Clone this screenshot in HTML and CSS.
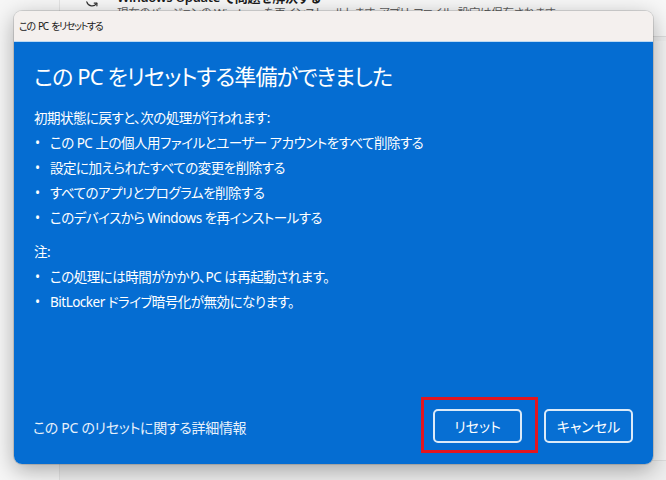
FILE: index.html
```html
<!DOCTYPE html>
<html lang="ja">
<head>
<meta charset="utf-8">
<title>この PC をリセットする</title>
<link rel="stylesheet" href="styles.css">
</head>
<body>
<div class="settings">
  <aside class="nav"></aside>
  <main class="content">
    <div class="card">
      <svg class="card-icon" viewBox="0 0 16 16" width="16" height="16" aria-hidden="true">
        <path d="M13.2 6.2A5.5 5.5 0 0 0 3.3 4.6" fill="none" stroke="#333" stroke-width="1.2" stroke-linecap="round"/>
        <path d="M3.1 2.2v2.7h2.7" fill="none" stroke="#333" stroke-width="1.2" stroke-linecap="round" stroke-linejoin="round"/>
        <path d="M2.8 9.8a5.5 5.5 0 0 0 9.9 1.6" fill="none" stroke="#333" stroke-width="1.2" stroke-linecap="round"/>
        <path d="M12.9 13.8v-2.7h-2.7" fill="none" stroke="#333" stroke-width="1.2" stroke-linecap="round" stroke-linejoin="round"/>
      </svg>
      <div class="card-text">
        <div class="card-title">Windows Update で問題を解決する</div>
        <div class="card-desc">現在のバージョンの Windows を再インストールします。アプリ、ファイル、設定は保存されます</div>
      </div>
    </div>
    <div class="card card-tall"></div>
  </main>
</div>

<div class="dialog">
  <div class="titlebar">この PC をリセットする</div>
  <div class="panel">
    <h1 class="heading">この PC をリセットする準備ができました</h1>
    <p class="lead">初期状態に戻すと、次の処理が行われます:</p>
    <ul class="bullets">
      <li>この PC 上の個人用ファイルとユーザー アカウントをすべて削除する</li>
      <li>設定に加えられたすべての変更を削除する</li>
      <li>すべてのアプリとプログラムを削除する</li>
      <li>このデバイスから Windows を再インストールする</li>
    </ul>
    <p class="note">注:</p>
    <ul class="bullets">
      <li>この処理には時間がかかり、PC は再起動されます。</li>
      <li>BitLocker ドライブ暗号化が無効になります。</li>
    </ul>
    <div class="footer">
      <a class="more">この PC のリセットに関する詳細情報</a>
      <div class="actions">
        <div class="mark-wrap">
          <button class="btn">リセット</button>
          <span class="mark"></span>
        </div>
        <button class="btn">キャンセル</button>
      </div>
    </div>
  </div>
</div>
</body>
</html>
```
FILE: styles.css
```css
* { box-sizing: border-box; }

html, body {
  margin: 0;
  padding: 0;
}

body {
  width: 666px;
  height: 480px;
  overflow: hidden;
  position: relative;
  background: #eeeeee;
  font-family: "Noto Sans", "Noto Sans CJK JP", sans-serif;
  font-feature-settings: "palt";
}

/* background settings page */
.settings {
  display: flex;
  height: 480px;
}

.nav {
  width: 60px;
  flex: none;
  background: #f6f6f6;
  border-right: 1px solid #e4e4e4;
}

.content {
  flex: 1;
  min-width: 0;
  display: flex;
  flex-direction: column;
  gap: 4px;
}

.card {
  display: flex;
  align-items: flex-start;
  gap: 17px;
  height: 47px;
  margin-top: -10px;
  padding: 0 0 0 24px;
  background: #f7f7f7;
  border-bottom: 1px solid #dcdcdc;
  overflow: hidden;
}

.card-icon {
  flex: none;
  margin-top: 2px;
}

.card-text {
  white-space: nowrap;
}

.card-title {
  font-size: 13px;
  line-height: 15px;
  font-weight: 600;
  color: #1b1b1b;
  letter-spacing: -0.3px;
}

.card-desc {
  font-size: 11.5px;
  line-height: 15px;
  color: #606060;
  letter-spacing: -0.3px;
}

.card-tall {
  height: 420px;
  margin-top: 0;
  background: #f3f3f3;
  border-bottom: 1px solid #dedede;
}

/* dialog overlay */
.dialog {
  position: absolute;
  left: 14px;
  top: 11px;
  width: 639px;
  height: 453px;
  border-radius: 8px;
  overflow: hidden;
  display: flex;
  flex-direction: column;
  box-shadow: 0 6px 22px rgba(0, 0, 0, 0.32), 0 0 0 1px rgba(0, 0, 0, 0.12);
}

.titlebar {
  height: 30px;
  flex: none;
  background: #f4f0ee;
  color: #1a1a1a;
  font-size: 10px;
  letter-spacing: -1.3px;
  word-spacing: 2px;
  line-height: 30px;
  padding-left: 5px;
}

.panel {
  flex: 1;
  display: flex;
  flex-direction: column;
  background: #056dd2;
  border-top: 1px solid #bcd9f3;
  color: #ffffff;
  padding: 19px 20px 21px 20px;
}

.heading {
  margin: 0;
  font-size: 22px;
  font-weight: 400;
  line-height: 30px;
  letter-spacing: -0.9px;
}

.lead,
.note {
  margin: 15px 0 0 0;
  font-size: 13.5px;
  line-height: 25px;
  letter-spacing: -0.5px;
}

.note {
  margin-top: 9px;
}

.bullets {
  list-style: none;
  margin: 0;
  padding: 0;
  font-size: 13.5px;
  line-height: 25px;
  letter-spacing: -0.5px;
}

.bullets li {
  display: flex;
}

.bullets li::before {
  content: "•";
  width: 15px;
  flex: none;
  padding-left: 1px;
}

.footer {
  margin-top: auto;
  display: flex;
  align-items: center;
  justify-content: space-between;
}

.more {
  font-size: 14px;
  letter-spacing: -0.3px;
  color: #e8f1fb;
  margin-left: -1px;
  margin-top: 2px;
}

.actions {
  display: flex;
  gap: 22px;
}

.mark-wrap {
  position: relative;
  display: flex;
}

.btn {
  width: 89px;
  height: 34px;
  border: 2px solid #dceaf8;
  border-radius: 5px;
  background: #076fd3;
  color: #ffffff;
  font-family: "Noto Sans", "Noto Sans CJK JP", sans-serif;
  font-feature-settings: "palt";
  font-size: 14px;
  padding: 0;
}

.mark {
  position: absolute;
  left: -12px;
  top: -12px;
  right: -16px;
  bottom: -10px;
  border: 3px solid #e3161f;
}
```
